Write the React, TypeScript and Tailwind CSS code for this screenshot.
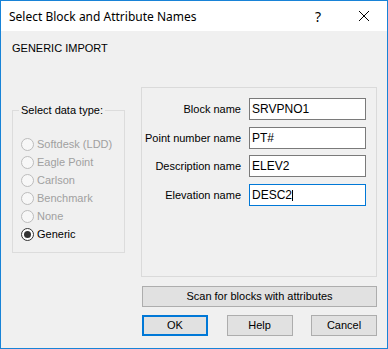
import React from 'react';

const fields = [
  { label: 'Block name', value: 'SRVPNO1', gap: 'mt-0' },
  { label: 'Point number name', value: 'PT#', gap: 'mt-[7px]' },
  { label: 'Description name', value: 'ELEV2', gap: 'mt-[6px]' },
  { label: 'Elevation name', value: 'DESC2', gap: 'mt-[7px]', focused: true },
];

const types = ['Softdesk (LDD)', 'Eagle Point', 'Carlson', 'Benchmark', 'None', 'Generic'];

const Radio = ({ label, checked }: { label: string; checked: boolean }) => (
  <div className="flex items-center h-[18px]">
    <span
      className={`w-[13px] h-[13px] rounded-full border flex items-center justify-center ${
        checked ? 'border-[#333333] bg-white' : 'border-[#bcbcbc] bg-[#f7f7f7]'
      }`}
    >
      {checked && <span className="w-[7px] h-[7px] rounded-full bg-[#333333]" />}
    </span>
    <span className={`ml-[3px] ${checked ? 'text-black' : 'text-[#a0a0a0]'}`}>{label}</span>
  </div>
);

const Button = ({ label, primary }: { label: string; primary?: boolean }) => (
  <div
    className={`w-[66px] h-[21px] flex items-center justify-center bg-[#e1e1e1] ${
      primary ? 'border-2 border-[#0078d7]' : 'border border-[#adadad]'
    }`}
  >
    {label}
  </div>
);

export default function App() {
  return (
    <div
      className="w-[388px] h-[349px] border border-[#1883d7] bg-[#f0f0f0] flex flex-col text-[11px] leading-[13px] text-black"
      style={{ fontFamily: '"Liberation Sans", Arial, sans-serif' }}
    >
      {/* title bar */}
      <div className="h-[30px] bg-white flex items-center">
        <span
          className="pl-[8px] text-[12px] flex-1"
          style={{ fontFamily: '"Noto Sans", "Open Sans", sans-serif' }}
        >
          Select Block and Attribute Names
        </span>
        <div className="w-[46px] h-[30px] flex items-center justify-center text-[14px]" style={{ fontFamily: '"Noto Sans", sans-serif' }}>
          ?
        </div>
        <div className="w-[46px] h-[30px] flex items-center justify-center">
          <svg width="10" height="10" viewBox="0 0 10 10">
            <path d="M0 0L10 10M10 0L0 10" stroke="#000" strokeWidth="1" />
          </svg>
        </div>
      </div>

      <div className="flex-1 pl-[11px] pt-[11px]">
        <div className="h-[13px]">GENERIC IMPORT</div>

        <div className="mt-[32px] flex items-start gap-[16px]">
          {/* data type group */}
          <div className="relative mt-[23px] w-[113px] h-[143px] border border-[#dcdcdc] pl-[8px] pt-[24px]">
            <span className="absolute -top-[7px] left-[6px] px-[2px] bg-[#f0f0f0]">Select data type:</span>
            {types.map((t) => (
              <Radio key={t} label={t} checked={t === 'Generic'} />
            ))}
          </div>

          {/* attribute names */}
          <div className="w-[236px] h-[190px] border border-[#dadada] pt-[10px]">
            {fields.map((f) => (
              <div key={f.label} className={`flex items-center ${f.gap}`}>
                <span className="w-[99px] text-right">{f.label}</span>
                <div
                  className={`ml-[8px] w-[117px] h-[22px] flex items-center pl-[2px] bg-white text-[12px] border ${
                    f.focused ? 'border-[#0078d7]' : 'border-[#7a7a7a]'
                  }`}
                >
                  {f.value}
                  {f.focused && <span className="w-px h-[11px] bg-black" />}
                </div>
              </div>
            ))}
          </div>
        </div>

        <div className="mt-[9px] ml-[130px] w-[235px]">
          <div className="h-[21px] flex items-center justify-center bg-[#e1e1e1] border border-[#adadad]">
            Scan for blocks with attributes
          </div>
          <div className="mt-[8px] flex justify-between">
            <Button label="OK" primary />
            <Button label="Help" />
            <Button label="Cancel" />
          </div>
        </div>
      </div>
    </div>
  );
}
